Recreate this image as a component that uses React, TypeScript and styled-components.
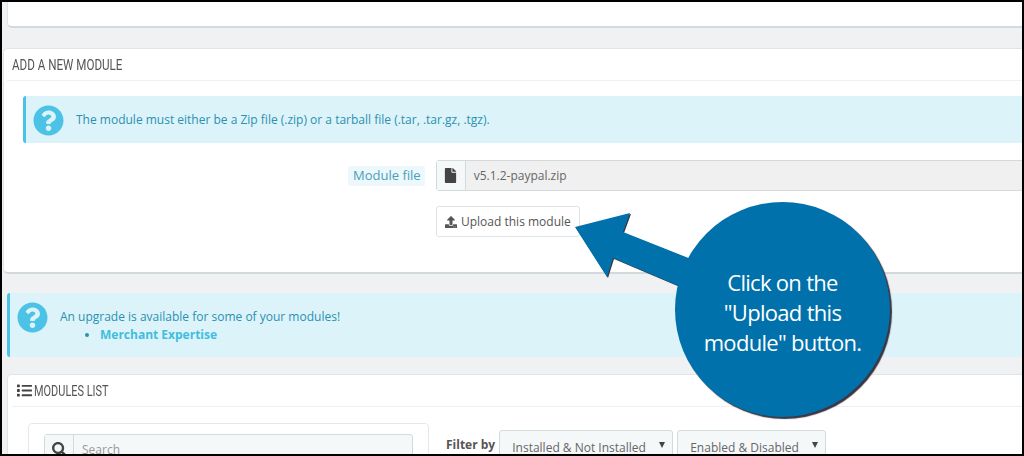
import React from 'react';
import styled, { createGlobalStyle } from 'styled-components';
import { FaFile, FaList, FaQuestionCircle, FaSearch, FaUpload } from 'react-icons/fa';

const Global = createGlobalStyle`
  html, body {
    margin: 0;
    padding: 0;
    background: #000;
  }
  * {
    box-sizing: border-box;
  }
`;

const Shot = styled.div`
  position: relative;
  width: 1024px;
  height: 456px;
  overflow: hidden;
  border: 2px solid #000;
  background: #eff1f2;
  font-family: 'Open Sans', 'Liberation Sans', sans-serif;
  font-size: 12px;
  color: #555;
`;

const Panel = styled.section<{ $left: number; $top: number; $height: number }>`
  margin: ${(p) => p.$top}px -30px 0 ${(p) => p.$left}px;
  height: ${(p) => p.$height}px;
  background: #fff;
  border: 1px solid #dfe4e6;
  border-bottom: 2px solid #d3dadd;
  border-radius: 5px;
  overflow: hidden;
`;

const TopPanel = styled(Panel)`
  border-top: 0;
  border-radius: 0 0 5px 5px;
`;

const PanelHead = styled.h3<{ $inset: number }>`
  display: flex;
  align-items: center;
  gap: 2px;
  height: 32px;
  margin: 0 0 0 ${(p) => p.$inset}px;
  padding: 0 0 0 5px;
  border-bottom: 1px solid #eef0f1;
  font-family: 'Roboto', sans-serif;
  font-size: 15px;
  font-weight: 400;
  color: #555;
  svg {
    flex: none;
    font-size: 15px;
    color: #444;
  }
`;

const HeadText = styled.span<{ $squeeze: number }>`
  white-space: nowrap;
  transform: scaleX(${(p) => p.$squeeze});
  transform-origin: left center;
`;

const Alert = styled.div<{ $left: number; $top: number; $height: number }>`
  display: flex;
  gap: 12px;
  height: ${(p) => p.$height}px;
  margin: ${(p) => p.$top}px 0 0 ${(p) => p.$left}px;
  padding: 9px 0 0 7px;
  background: #dcf4f9;
  border-left: 3px solid #4ac2e6;
  border-radius: 3px 0 0 3px;
  color: #2b90b2;
  line-height: 18px;
  > svg {
    flex: none;
    width: 31px;
    height: 31px;
    color: #4cc3e6;
  }
`;

const AlertText = styled.div`
  padding-top: 6px;
`;

const UpgradeList = styled.ul`
  margin: 0;
  padding-left: 40px;
  a {
    color: #41bde0;
    font-weight: 700;
  }
`;

const FormRow = styled.div`
  display: flex;
  align-items: center;
  margin: 17px 0 0 344px;
`;

const FieldLabel = styled.span`
  padding: 1px 4px 2px 5px;
  margin-right: 11px;
  background: #ecf8fb;
  border-radius: 2px;
  font-size: 13px;
  line-height: 17px;
  color: #4a9fbb;
`;

const FileInput = styled.div`
  display: flex;
  align-items: center;
  flex: 1;
  height: 31px;
  background: #f0f0f0;
  border: 1px solid #d3dadd;
  border-radius: 3px;
  color: #666;
`;

const Addon = styled.span`
  display: flex;
  align-items: center;
  justify-content: center;
  flex: none;
  width: 29px;
  height: 100%;
  background: #f5f8f9;
  border-right: 1px solid #d3dadd;
  color: #444;
  svg {
    font-size: 15px;
  }
`;

const FileName = styled.span`
  padding-left: 8px;
`;

const UploadButton = styled.button`
  display: flex;
  align-items: center;
  gap: 4px;
  width: 144px;
  height: 31px;
  margin: 15px 0 0 432px;
  padding: 0 0 0 8px;
  background: #fff;
  border: 1px solid #dfe4e6;
  border-radius: 3px;
  font: inherit;
  color: #555;
`;

const ListBody = styled.div`
  display: flex;
  align-items: flex-start;
  gap: 4px;
  padding: 16px 0 0 20px;
`;

const SearchCard = styled.div`
  flex: none;
  width: 401px;
  height: 60px;
  padding: 10px 15px;
  background: #fff;
  border: 1px solid #e4e8ea;
  border-radius: 4px;
`;

const SearchInput = styled.div`
  display: flex;
  align-items: center;
  height: 31px;
  background: #f5f8f9;
  border: 1px solid #d3dadd;
  border-radius: 3px;
  color: #999;
`;

const FilterLabel = styled.span`
  margin: 13px 0 0 13px;
  font-weight: 700;
  color: #555;
`;

const Select = styled.div<{ $width: number }>`
  display: flex;
  align-items: center;
  justify-content: space-between;
  width: ${(p) => p.$width}px;
  height: 31px;
  margin-top: 7px;
  padding: 4px 7px 0 12px;
  background: #f5f8f9;
  border: 1px solid #d3dadd;
  border-radius: 3px;
  color: #666;
  &::after {
    content: '';
    border: 3px solid transparent;
    border-top: 6px solid #444;
    border-bottom: 0;
    margin-bottom: 6px;
  }
`;

const Callout = styled.div`
  position: absolute;
  left: 673px;
  top: 200px;
  display: flex;
  align-items: center;
  justify-content: center;
  width: 215px;
  height: 215px;
  padding-top: 4px;
  border-radius: 50%;
  background: #0071ab;
  box-shadow: 2px 2px 1px #3c3340;
  font-size: 22px;
  line-height: 30px;
  letter-spacing: -0.7px;
  text-align: center;
  color: #fff;
`;

const Arrow = styled.svg`
  position: absolute;
  left: 559px;
  top: 199px;
  filter: drop-shadow(1.5px 1.5px 0.5px #3c3340);
`;

export default function App() {
  return (
    <>
      <Global />
      <Shot>
        <TopPanel $left={5} $top={0} $height={26} />
        <Panel $left={1} $top={20} $height={226}>
          <PanelHead $inset={3}>
            <HeadText $squeeze={0.775}>ADD A NEW MODULE</HeadText>
          </PanelHead>
          <Alert $left={19} $top={15} $height={47}>
            <FaQuestionCircle />
            <AlertText>
              The module must either be a Zip file (.zip) or a tarball file (.tar, .tar.gz, .tgz).
            </AlertText>
          </Alert>
          <FormRow>
            <FieldLabel>Module file</FieldLabel>
            <FileInput>
              <Addon>
                <FaFile />
              </Addon>
              <FileName>v5.1.2-paypal.zip</FileName>
            </FileInput>
          </FormRow>
          <UploadButton>
            <FaUpload />
            Upload this module
          </UploadButton>
        </Panel>
        <Alert $left={5} $top={19} $height={64}>
          <FaQuestionCircle />
          <AlertText>
            An upgrade is available for some of your modules!
            <UpgradeList>
              <li>
                <a>Merchant Expertise</a>
              </li>
            </UpgradeList>
          </AlertText>
        </Alert>
        <Panel $left={5} $top={17} $height={90}>
          <PanelHead $inset={4}>
            <FaList />
            <HeadText $squeeze={0.73}>MODULES LIST</HeadText>
          </PanelHead>
          <ListBody>
            <SearchCard>
              <SearchInput>
                <Addon>
                  <FaSearch />
                </Addon>
                <FileName>Search</FileName>
              </SearchInput>
            </SearchCard>
            <FilterLabel>Filter by</FilterLabel>
            <Select $width={174}>Installed &amp; Not Installed</Select>
            <Select $width={149}>Enabled &amp; Disabled</Select>
          </ListBody>
        </Panel>
        <Arrow width="140" height="90" viewBox="0 0 140 90">
          <path d="M14 26 L69 12 L62 31 L135 60 L125 88 L52 57 L46 76 Z" fill="#0071ab" />
        </Arrow>
        <Callout>
          <div>
            Click on the
            <br />
            "Upload this
            <br />
            module" button.
          </div>
        </Callout>
      </Shot>
    </>
  );
}
